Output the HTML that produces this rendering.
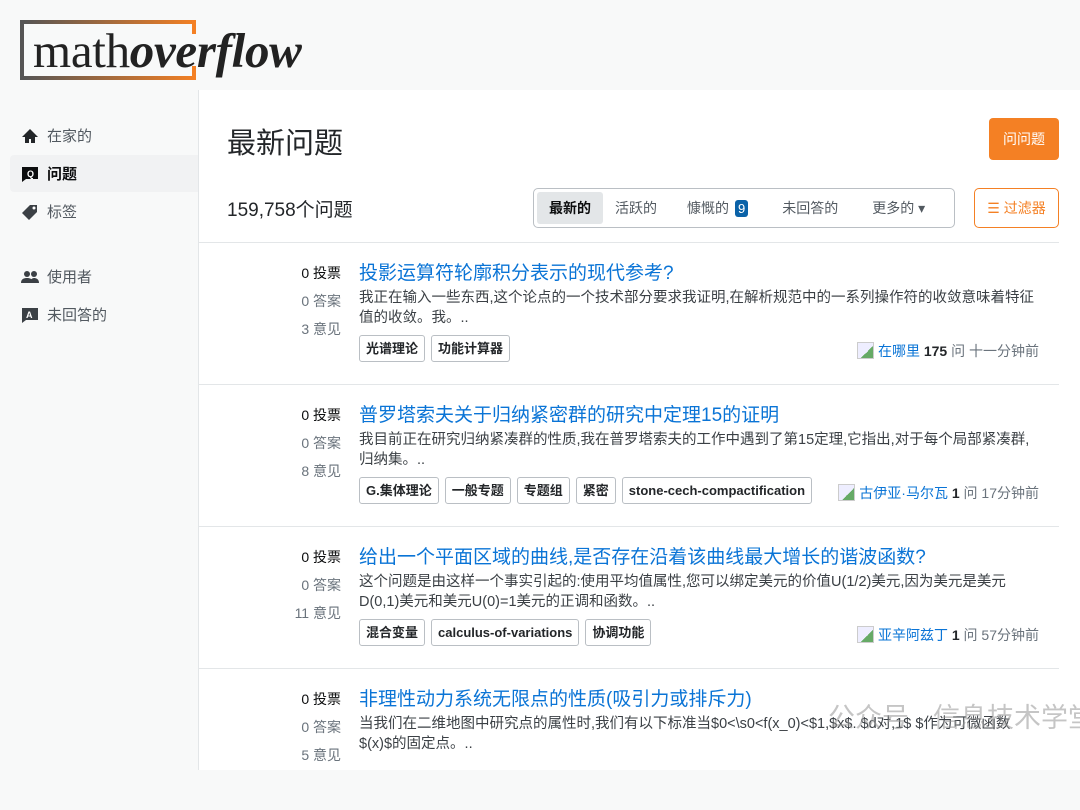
<!DOCTYPE html>
<html><head><meta charset="utf-8"><style>
*{box-sizing:border-box;margin:0;padding:0}
body{width:1080px;height:759px;overflow:hidden;background:#f8f9f9;font-family:"Liberation Sans","Noto Sans CJK SC",sans-serif;color:#232629;position:relative}
.logo{position:absolute;left:20px;top:20px;width:175px;height:60px;border:4px solid;border-image:linear-gradient(90deg,#555,#f48024) 1;border-right:none}
.logo:after{content:"";position:absolute;right:-1px;top:-4px;width:4px;height:14px;background:#f48024}
.logo .b{position:absolute;right:-1px;bottom:-4px;width:4px;height:14px;background:#f48024}
.lt{position:absolute;left:33px;top:22px;font-family:"Liberation Serif",serif;font-size:49px;color:#222;letter-spacing:-0.3px}
.lt i{font-weight:bold}
.nav{position:absolute;left:10px;width:188px;height:37px;font-size:15px;color:#525960;display:flex;align-items:center;padding-left:11px}
.nav span.ic{width:18px;height:16px;margin-right:8px;display:inline-block}
.nav.sel{background:#f1f2f3;color:#0c0d0e;font-weight:bold;border-radius:4px 0 0 4px}
.main{position:absolute;left:198px;top:90px;width:882px;height:680px;background:#fff;border-left:1px solid #e3e6e8}
h1{position:absolute;left:28px;top:30px;font-size:29px;font-weight:normal}
.ask{position:absolute;left:790px;top:28px;width:70px;height:42px;background:#f48024;color:#fff;border-radius:4px;font-size:14px;display:flex;align-items:center;justify-content:center}
.cnt{position:absolute;left:28px;top:105px;font-size:19px}
.tabs{position:absolute;left:334px;top:98px;width:422px;height:40px;border:1px solid #babfc4;border-radius:5px;display:flex;align-items:center;font-size:14px;color:#525960;padding:0 3px}
.tabs div{padding:0 12px;height:32px;line-height:32px;white-space:nowrap}
.tabs .on{background:#e3e6e8;color:#0c0d0e;font-weight:bold;border-radius:3px}
.badge{display:inline-block;background:#0a62a8;color:#fff;border-radius:3px;padding:0 3px;line-height:17px;font-size:13px;margin-left:6px}
.filt{position:absolute;left:775px;top:98px;width:85px;height:40px;border:1px solid #f48024;border-radius:5px;color:#f48024;font-size:14px;display:flex;align-items:center;justify-content:center}
.q{position:absolute;left:0;width:860px;height:142px;border-top:1px solid #e3e6e8}
.st{position:absolute;right:718px;top:16px;text-align:right;font-size:14px;color:#6a737c;line-height:28px;white-space:nowrap}
.st b{font-weight:normal;color:#0c0d0e}
.tt{position:absolute;left:160px;top:15px;font-size:19px;color:#0a74d6;white-space:nowrap}
.ex{position:absolute;left:160px;top:45px;width:676px;font-size:14.5px;color:#3b4045;line-height:20px}
.tags{position:absolute;left:160px;top:92px;display:flex;gap:6px}
.tags span{border:1px solid #babfc4;border-radius:3px;font-size:13px;font-weight:bold;padding:0 6px;line-height:25px;color:#232629}
.us{position:absolute;right:20px;top:98px;font-size:14px;color:#6a737c;white-space:nowrap}
.us a{color:#0a74d6}.us b{color:#232629}
.av{display:inline-block;width:17px;height:17px;border:1px solid #ccc;background:linear-gradient(135deg,#eef 60%,#6a6 60%);vertical-align:-3px;margin-right:4px}
.wm{position:absolute;left:828px;top:696px;font-size:27px;color:rgba(150,150,150,.55);white-space:nowrap}
</style></head><body>
<div class="logo"><div class="b"></div></div>
<div class="lt">math<i>overflow</i></div>
<div class="nav" style="top:117px"><span class="ic"><svg width="18" height="16"><path d="M9 1L1 9h3v6h4v-4h2v4h4V9h3z" fill="#232629"/></svg></span>在家的</div>
<div class="nav sel" style="top:155px"><span class="ic"><svg width="18" height="16"><path d="M1 1h16v12H5l-4 3z" fill="#0c0d0e"/><text x="6" y="11" font-size="9" fill="#fff" font-weight="bold" font-family="Liberation Sans">Q</text></svg></span>问题</div>
<div class="nav" style="top:193px"><span class="ic"><svg width="18" height="16"><path d="M9 1h7v7l-8 8-7-7z" fill="#3b4045"/><circle cx="13" cy="4" r="1.5" fill="#fff"/></svg></span>标签</div>
<div class="nav" style="top:258px"><span class="ic"><svg width="18" height="16"><circle cx="6" cy="5" r="3" fill="#3b4045"/><circle cx="13" cy="5" r="3" fill="#3b4045"/><path d="M0 14c0-4 3-5 6-5s6 1 6 5zM9 14c0-3 2-5 4-5s5 1 5 5z" fill="#3b4045"/></svg></span>使用者</div>
<div class="nav" style="top:296px"><span class="ic"><svg width="18" height="16"><path d="M1 1h16v12H5l-4 3z" fill="#3b4045"/><text x="5" y="11" font-size="9" fill="#fff" font-weight="bold" font-family="Liberation Sans">A</text></svg></span>未回答的</div>
<div class="main">
<h1>最新问题</h1>
<div class="ask">问问题</div>
<div class="cnt">159,758个问题</div>
<div class="tabs"><div class="on">最新的</div><div>活跃的</div><div style="padding-left:18px">慷慨的<span class="badge">9</span></div><div style="padding-left:22px">未回答的</div><div style="padding-left:22px">更多的 ▾</div></div>
<div class="filt">☰ 过滤器</div>

<div class="q" style="top:152px"><div class="st"><b>0 投票</b><br>0 答案<br>3 意见</div>
<div class="tt">投影运算符轮廓积分表示的现代参考?</div>
<div class="ex">我正在输入一些东西,这个论点的一个技术部分要求我证明,在解析规范中的一系列操作符的收敛意味着特征值的收敛。我。..</div>
<div class="tags"><span>光谱理论</span><span>功能计算器</span></div>
<div class="us"><span class="av"></span><a>在哪里</a> <b>175</b> 问 十一分钟前</div></div>

<div class="q" style="top:294px"><div class="st"><b>0 投票</b><br>0 答案<br>8 意见</div>
<div class="tt">普罗塔索夫关于归纳紧密群的研究中定理15的证明</div>
<div class="ex">我目前正在研究归纳紧凑群的性质,我在普罗塔索夫的工作中遇到了第15定理,它指出,对于每个局部紧凑群,归纳集。..</div>
<div class="tags"><span>G.集体理论</span><span>一般专题</span><span>专题组</span><span>紧密</span><span>stone-cech-compactification</span></div>
<div class="us"><span class="av"></span><a>古伊亚·马尔瓦</a> <b>1</b> 问 17分钟前</div></div>

<div class="q" style="top:436px"><div class="st"><b>0 投票</b><br>0 答案<br>11 意见</div>
<div class="tt">给出一个平面区域的曲线,是否存在沿着该曲线最大增长的谐波函数?</div>
<div class="ex">这个问题是由这样一个事实引起的:使用平均值属性,您可以绑定美元的价值U(1/2)美元,因为美元是美元D(0,1)美元和美元U(0)=1美元的正调和函数。..</div>
<div class="tags"><span>混合变量</span><span>calculus-of-variations</span><span>协调功能</span></div>
<div class="us"><span class="av"></span><a>亚辛阿兹丁</a> <b>1</b> 问 57分钟前</div></div>

<div class="q" style="top:578px"><div class="st"><b>0 投票</b><br>0 答案<br>5 意见</div>
<div class="tt">非理性动力系统无限点的性质(吸引力或排斥力)</div>
<div class="ex">当我们在二维地图中研究点的属性时,我们有以下标准当$0&lt;\s0&lt;f(x_0)&lt;$1,$x$. $d对,1$ $作为可微函数$(x)$的固定点。..</div>
</div>
</div>
<div class="wm">公众号 · 信息技术学堂</div>
</body></html>
